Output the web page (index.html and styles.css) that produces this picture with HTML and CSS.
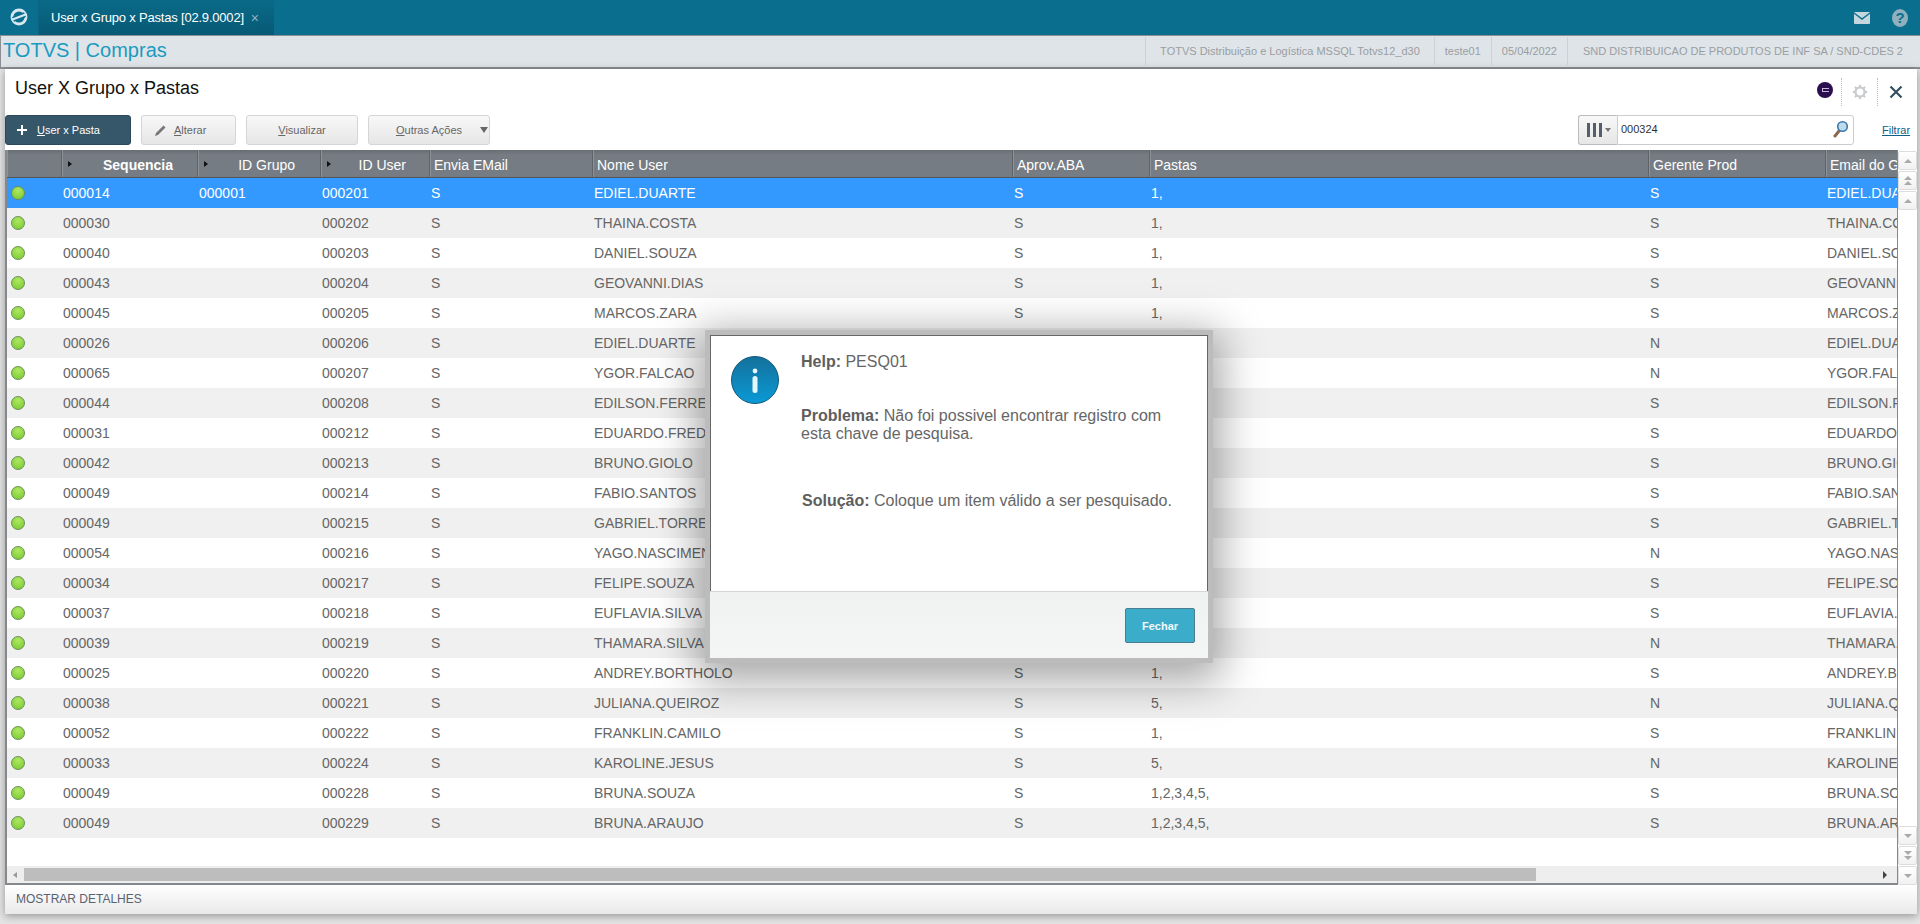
FILE: index.html
```html
<!DOCTYPE html>
<html lang="pt-BR">
<head>
    <meta charset="UTF-8">
    <title>User x Grupo x Pastas</title>
    <link rel="stylesheet" href="styles.css">
</head>
<body>
    <header class="topbar">
        <div class="logo">
            <svg width="20" height="20" viewBox="0 0 20 20"><circle cx="10" cy="10" r="7" fill="none" stroke="#d8e8ee" stroke-width="2.8"/><path d="M4 12.4 L16 7.6" stroke="#0a6f8f" stroke-width="5"/><path d="M3.5 12.6 L16.5 7.4" stroke="#d8e8ee" stroke-width="2.2"/></svg>
        </div>
        <div class="tab">
            <span>User x Grupo x Pastas [02.9.0002]</span>
            <span class="tab-close">×</span>
        </div>
        <div class="top-icons">
            <svg width="16" height="12" viewBox="0 0 16 12"><rect width="16" height="12" rx="1" fill="#c4d6de"/><path d="M0 1 L8 7 L16 1" fill="none" stroke="#0a6f8f" stroke-width="1.4"/></svg>
            <span class="help-icon">?</span>
        </div>
    </header>

    <div class="appbar">
        <div class="brand">TOTVS | Compras</div>
        <div class="appinfo">
            <span class="info-cell">TOTVS Distribuição e Logística MSSQL Totvs12_d30</span>
            <span class="info-cell">teste01</span>
            <span class="info-cell">05/04/2022</span>
            <span class="info-cell">SND DISTRIBUICAO DE PRODUTOS DE INF SA / SND-CDES 2</span>
        </div>
    </div>

    <main class="panel">
        <div class="title-row">
            <h1>User X Grupo x Pastas</h1>
            <div class="window-tools">
                <span class="dot"><i></i></span>
                <span class="tool">
                    <svg width="16" height="16" viewBox="0 0 16 16"><circle cx="8" cy="8" r="4.6" fill="none" stroke="#c9cdd0" stroke-width="2.4"/><path d="M8 .8V3M8 13v2.2M.8 8H3M13 8h2.2M2.9 2.9l1.6 1.6M11.5 11.5l1.6 1.6M13.1 2.9l-1.6 1.6M4.5 11.5l-1.6 1.6" stroke="#c9cdd0" stroke-width="2"/></svg>
                </span>
                <span class="tool">
                    <svg width="14" height="14" viewBox="0 0 14 14"><path d="M1.5 1.5 L12.5 12.5 M12.5 1.5 L1.5 12.5" stroke="#36505f" stroke-width="2.2"/></svg>
                </span>
            </div>
        </div>

        <div class="toolbar">
            <button class="btn btn-primary">
                <svg width="14" height="14" viewBox="0 0 14 14"><path d="M7 2V12M2 7H12" stroke="#fff" stroke-width="2"/></svg>
                <span><u>U</u>ser x Pasta</span>
            </button>
            <button class="btn btn-alterar">
                <svg width="13" height="13" viewBox="0 0 13 13"><path d="M1 12 L2 9 L9.5 1.5 L11.5 3.5 L4 11 Z" fill="#777"/></svg>
                <span><u>A</u>lterar</span>
            </button>
            <button class="btn btn-visualizar"><span><u>V</u>isualizar</span></button>
            <button class="btn btn-outras">
                <span><u>O</u>utras Ações</span>
                <i class="caret"></i>
            </button>
            <div class="search">
                <div class="search-select">
                    <span class="bars"><i></i><i></i><i></i></span>
                    <i class="caret-small"></i>
                </div>
                <div class="search-input">
                    <span>000324</span>
                    <svg width="16" height="18" viewBox="0 0 16 18"><path d="M6 11 L2 16" stroke="#8a6a4a" stroke-width="3" stroke-linecap="round"/><circle cx="9.5" cy="6.5" r="4.8" fill="#bcdcf0" stroke="#3f78a8" stroke-width="1.6"/></svg>
                </div>
            </div>
            <a class="filter-link">Filtrar</a>
        </div>

        <div class="grid-wrap">
            <div class="grid-main">
                <div class="grid-body">
                    <table class="grid">
                        <colgroup>
                            <col class="c-status"><col class="c-seq"><col class="c-grupo"><col class="c-user"><col class="c-envia"><col class="c-nome"><col class="c-aprov"><col class="c-pastas"><col class="c-gerente"><col class="c-email">
                        </colgroup>
                        <thead>
                            <tr>
                                <th></th>
                                <th class="th-num"><i class="th-arrow"></i><b>Sequencia</b></th>
                                <th class="th-num th-grupo"><i class="th-arrow"></i>ID Grupo</th>
                                <th class="th-num th-user"><i class="th-arrow"></i>ID User</th>
                                <th>Envia EMail</th>
                                <th>Nome User</th>
                                <th>Aprov.ABA</th>
                                <th>Pastas</th>
                                <th>Gerente Prod</th>
                                <th>Email do Gerente</th>
                            </tr>
                        </thead>
                        <tbody>
                            <tr class="selected"><td><i class="led"></i></td><td>000014</td><td>000001</td><td>000201</td><td>S</td><td>EDIEL.DUARTE</td><td>S</td><td>1,</td><td>S</td><td>EDIEL.DUARTE</td></tr>
                            <tr><td><i class="led"></i></td><td>000030</td><td></td><td>000202</td><td>S</td><td>THAINA.COSTA</td><td>S</td><td>1,</td><td>S</td><td>THAINA.COSTA</td></tr>
                            <tr><td><i class="led"></i></td><td>000040</td><td></td><td>000203</td><td>S</td><td>DANIEL.SOUZA</td><td>S</td><td>1,</td><td>S</td><td>DANIEL.SOUZA</td></tr>
                            <tr><td><i class="led"></i></td><td>000043</td><td></td><td>000204</td><td>S</td><td>GEOVANNI.DIAS</td><td>S</td><td>1,</td><td>S</td><td>GEOVANNI.DIAS</td></tr>
                            <tr><td><i class="led"></i></td><td>000045</td><td></td><td>000205</td><td>S</td><td>MARCOS.ZARA</td><td>S</td><td>1,</td><td>S</td><td>MARCOS.ZARA</td></tr>
                            <tr><td><i class="led"></i></td><td>000026</td><td></td><td>000206</td><td>S</td><td>EDIEL.DUARTE</td><td>S</td><td>1,</td><td>N</td><td>EDIEL.DUARTE</td></tr>
                            <tr><td><i class="led"></i></td><td>000065</td><td></td><td>000207</td><td>S</td><td>YGOR.FALCAO</td><td>S</td><td>1,</td><td>N</td><td>YGOR.FALCAO</td></tr>
                            <tr><td><i class="led"></i></td><td>000044</td><td></td><td>000208</td><td>S</td><td>EDILSON.FERREIRA</td><td>S</td><td>1,</td><td>S</td><td>EDILSON.FERREIRA</td></tr>
                            <tr><td><i class="led"></i></td><td>000031</td><td></td><td>000212</td><td>S</td><td>EDUARDO.FREDERICO</td><td>S</td><td>1,</td><td>S</td><td>EDUARDO.FREDERICO</td></tr>
                            <tr><td><i class="led"></i></td><td>000042</td><td></td><td>000213</td><td>S</td><td>BRUNO.GIOLO</td><td>S</td><td>1,</td><td>S</td><td>BRUNO.GIOLO</td></tr>
                            <tr><td><i class="led"></i></td><td>000049</td><td></td><td>000214</td><td>S</td><td>FABIO.SANTOS</td><td>S</td><td>1,</td><td>S</td><td>FABIO.SANTOS</td></tr>
                            <tr><td><i class="led"></i></td><td>000049</td><td></td><td>000215</td><td>S</td><td>GABRIEL.TORRES</td><td>S</td><td>1,</td><td>S</td><td>GABRIEL.TORRES</td></tr>
                            <tr><td><i class="led"></i></td><td>000054</td><td></td><td>000216</td><td>S</td><td>YAGO.NASCIMENTO</td><td>S</td><td>1,</td><td>N</td><td>YAGO.NASCIMENTO</td></tr>
                            <tr><td><i class="led"></i></td><td>000034</td><td></td><td>000217</td><td>S</td><td>FELIPE.SOUZA</td><td>S</td><td>1,</td><td>S</td><td>FELIPE.SOUZA</td></tr>
                            <tr><td><i class="led"></i></td><td>000037</td><td></td><td>000218</td><td>S</td><td>EUFLAVIA.SILVA</td><td>S</td><td>1,</td><td>S</td><td>EUFLAVIA.SILVA</td></tr>
                            <tr><td><i class="led"></i></td><td>000039</td><td></td><td>000219</td><td>S</td><td>THAMARA.SILVA</td><td>S</td><td>1,</td><td>N</td><td>THAMARA.SILVA</td></tr>
                            <tr><td><i class="led"></i></td><td>000025</td><td></td><td>000220</td><td>S</td><td>ANDREY.BORTHOLO</td><td>S</td><td>1,</td><td>S</td><td>ANDREY.BORTHOLO</td></tr>
                            <tr><td><i class="led"></i></td><td>000038</td><td></td><td>000221</td><td>S</td><td>JULIANA.QUEIROZ</td><td>S</td><td>5,</td><td>N</td><td>JULIANA.QUEIROZ</td></tr>
                            <tr><td><i class="led"></i></td><td>000052</td><td></td><td>000222</td><td>S</td><td>FRANKLIN.CAMILO</td><td>S</td><td>1,</td><td>S</td><td>FRANKLIN.CAMILO</td></tr>
                            <tr><td><i class="led"></i></td><td>000033</td><td></td><td>000224</td><td>S</td><td>KAROLINE.JESUS</td><td>S</td><td>5,</td><td>N</td><td>KAROLINE.JESUS</td></tr>
                            <tr><td><i class="led"></i></td><td>000049</td><td></td><td>000228</td><td>S</td><td>BRUNA.SOUZA</td><td>S</td><td>1,2,3,4,5,</td><td>S</td><td>BRUNA.SOUZA</td></tr>
                            <tr><td><i class="led"></i></td><td>000049</td><td></td><td>000229</td><td>S</td><td>BRUNA.ARAUJO</td><td>S</td><td>1,2,3,4,5,</td><td>S</td><td>BRUNA.ARAUJO</td></tr>
                        </tbody>
                    </table>
                </div>
                <div class="hscroll">
                    <i class="arrow-left"></i>
                    <div class="hscroll-track"><div class="hscroll-thumb"></div></div>
                    <i class="arrow-right"></i>
                </div>
            </div>
            <div class="vscroll">
                <div class="vbtn"><i class="up bar-top"></i></div>
                <div class="vbtn"><i class="up"></i><i class="up"></i></div>
                <div class="vbtn"><i class="up"></i></div>
                <div class="vspace"></div>
                <div class="vbtn"><i class="down"></i></div>
                <div class="vbtn"><i class="down"></i><i class="down"></i></div>
                <div class="vbtn"><i class="down bar-bottom"></i></div>
            </div>
        </div>

        <div class="details">MOSTRAR DETALHES</div>
    </main>

    <div class="dialog">
        <div class="dialog-body">
            <div class="info-badge">
                <svg width="48" height="48" viewBox="0 0 48 48">
                    <defs><linearGradient id="infoFill" x1="0" y1="0" x2="0" y2="1"><stop offset="0" stop-color="#14709b"/><stop offset="1" stop-color="#0a9ad6"/></linearGradient></defs>
                    <circle cx="24" cy="24" r="23.5" fill="url(#infoFill)" stroke="#125a7c"/>
                    <circle cx="24" cy="15" r="2.4" fill="#e4f7fc"/>
                    <rect x="21.5" y="20" width="5" height="17" rx="2.5" fill="#e4f7fc"/>
                </svg>
            </div>
            <div class="dialog-text">
                <p class="msg-help"><b>Help:</b> PESQ01</p>
                <p class="msg-problem"><b>Problema:</b> Não foi possivel encontrar registro com esta chave de pesquisa.</p>
                <p class="msg-solution"><b>Solução:</b> Coloque um item válido a ser pesquisado.</p>
            </div>
        </div>
        <div class="dialog-footer">
            <button class="btn-close">Fechar</button>
        </div>
    </div>
</body>
</html>
```

FILE: styles.css
```css
* {
    box-sizing: border-box;
}

html, body {
    height: 100%;
}

body {
    margin: 0;
    height: 924px;
    overflow: hidden;
    font-family: "Liberation Sans", Arial, sans-serif;
    background-color: #e4e4e4;
    color: #666;
}

/* top bar */
.topbar {
    display: flex;
    align-items: stretch;
    height: 35px;
    background-color: #0a6f8f;
}

.logo {
    width: 38px;
    display: flex;
    align-items: center;
    justify-content: center;
    padding-bottom: 2px;
}

.tab {
    width: 236px;
    display: flex;
    align-items: center;
    gap: 7px;
    padding-left: 12px;
    color: #fff;
    font-size: 13px;
    letter-spacing: -0.2px;
    background: linear-gradient(#0a6a88, #075a75);
    border-left: 1px solid #0a6482;
}

.tab-close {
    color: #8fb4c2;
    font-size: 14px;
}

.top-icons {
    margin-left: auto;
    display: flex;
    align-items: center;
    gap: 22px;
    padding-right: 12px;
}

.help-icon {
    width: 16px;
    height: 18px;
    border-radius: 50%;
    background-color: #8fb0bd;
    color: #0a6f8f;
    font-size: 15px;
    font-weight: bold;
    text-align: center;
    line-height: 18px;
}

.appbar {
    display: flex;
    justify-content: space-between;
    height: 34px;
    background-color: #dfe4e8;
    border: 1px solid #8a8f94;
    border-width: 1px 0 2px 1px;
}

.brand {
    font-size: 20px;
    color: #1b9bc0;
    padding-left: 2px;
    line-height: 28px;
}

.appinfo {
    display: flex;
    font-size: 11px;
    color: #9a9ea2;
}

.info-cell {
    display: flex;
    align-items: center;
    padding: 0 10px;
    border-left: 1px solid #ccd1d5;
    margin: 1px 0 2px;
    white-space: nowrap;
}

.info-cell:first-child {
    padding: 0 14px;
}

.info-cell:last-child {
    padding: 0 17px 0 15px;
}

/* window */
.panel {
    display: flex;
    flex-direction: column;
    height: 845px;
    margin: 0 3px 0 5px;
    background-color: #fff;
    box-shadow: 0 2px 8px rgba(0, 0, 0, 0.35);
}

.title-row {
    display: flex;
    justify-content: space-between;
    height: 46px;
    padding: 7px 0 0 10px;
}

h1 {
    margin: 0;
    font-size: 18px;
    font-weight: normal;
    color: #111;
    line-height: 24px;
}

.window-tools {
    display: flex;
    align-items: flex-start;
    padding: 2px 4px 0 0;
}

.dot {
    width: 16px;
    height: 16px;
    margin: 4px 8px 0 0;
    border-radius: 50%;
    background-color: #2b0f4f;
    display: flex;
    align-items: center;
    justify-content: center;
}

.dot i {
    width: 7px;
    height: 4px;
    border: 1px solid #c9b8de;
    border-right: none;
}

.tool {
    width: 36px;
    height: 28px;
    display: flex;
    align-items: center;
    justify-content: center;
    border-left: 1px dotted #bbb;
}

.toolbar {
    display: flex;
    align-items: center;
    height: 30px;
    margin-bottom: 5px;
}

.btn {
    height: 30px;
    display: flex;
    align-items: center;
    justify-content: center;
    gap: 8px;
    margin-right: 10px;
    padding: 0;
    font-family: inherit;
    font-size: 11px;
    color: #666;
    border: 1px solid #d5d5d5;
    border-radius: 3px;
    background: linear-gradient(#f8f8f8, #e6e6e6);
}

.btn-primary {
    width: 126px;
    color: #fff;
    background: #36566a;
    border-color: #2d4a5c;
    justify-content: flex-start;
    padding-left: 9px;
}

.btn-alterar {
    width: 95px;
    justify-content: flex-start;
    padding-left: 12px;
    gap: 7px;
}

.btn-visualizar {
    width: 112px;
}

.btn-outras {
    width: 122px;
    position: relative;
}

.caret {
    position: absolute;
    right: 1px;
    top: 11px;
    border-left: 4px solid transparent;
    border-right: 4px solid transparent;
    border-top: 6px solid #666;
}

.search {
    display: flex;
    height: 30px;
    margin-left: auto;
    margin-right: 28px;
}

.search-select {
    width: 39px;
    display: flex;
    align-items: center;
    gap: 3px;
    padding-left: 8px;
    border: 1px solid #bbb;
    border-right: none;
    border-radius: 3px 0 0 3px;
    background: linear-gradient(#f8f8f8, #e6e6e6);
}

.bars {
    display: flex;
    gap: 3px;
}

.bars i {
    width: 3px;
    height: 14px;
    background-color: #555f6b;
}

.caret-small {
    border-left: 3px solid transparent;
    border-right: 3px solid transparent;
    border-top: 4px solid #777;
}

.search-input {
    width: 237px;
    display: flex;
    align-items: center;
    justify-content: space-between;
    padding: 0 4px 3px 3px;
    font-size: 11px;
    color: #333;
    border: 1px solid #ccc;
    border-radius: 0 3px 3px 0;
}

.filter-link {
    width: 33px;
    margin-right: 2px;
    font-size: 11px;
    color: #0f5f86;
    text-decoration: underline;
}

/* grid */
.grid-wrap {
    display: flex;
    height: 735px;
}

.grid-main {
    width: 1893px;
    display: flex;
    flex-direction: column;
    border-left: 2px solid #85898d;
    border-bottom: 2px solid #85898d;
    border-right: 1px solid #85898d;
}

.grid-body {
    flex: 1;
    overflow: hidden;
}

.grid {
    table-layout: fixed;
    border-collapse: separate;
    border-spacing: 0;
    width: 1891px;
    font-size: 14px;
}

.c-status { width: 54px; }
.c-seq { width: 136px; }
.c-grupo { width: 123px; }
.c-user { width: 109px; }
.c-envia { width: 163px; }
.c-nome { width: 420px; }
.c-aprov { width: 137px; }
.c-pastas { width: 499px; }
.c-gerente { width: 177px; }
.c-email { width: 73px; }

.grid th {
    height: 28px;
    padding: 2px 4px 0 4px;
    text-align: left;
    font-weight: normal;
    color: #fff;
    white-space: nowrap;
    overflow: hidden;
    position: relative;
    background: linear-gradient(#696e74 0, #767c83 5px, #767c83 100%);
    border-left: 1px solid #5f6368;
    box-shadow: inset 1px 0 0 #8d9297;
    border-bottom: 1px solid #555;
}

.grid th:first-child {
    border-left: none;
}

.grid .th-num {
    text-align: right;
    padding-right: 24px;
}

.grid .th-grupo {
    padding-right: 25px;
}

.grid .th-user {
    padding-right: 23px;
}

.th-arrow {
    position: absolute;
    left: 6px;
    top: 11px;
    border-top: 3px solid transparent;
    border-bottom: 3px solid transparent;
    border-left: 4px solid #111;
}

.grid td {
    height: 30px;
    padding: 0 2px;
    white-space: nowrap;
    overflow: hidden;
    color: #666;
}

.grid tbody tr:nth-child(even) td {
    background-color: #f0f0f0;
}

.grid tbody tr.selected td {
    background-color: #3399ff;
    color: #fff;
}

.led {
    display: block;
    width: 14px;
    height: 14px;
    margin-left: 2px;
    border-radius: 50%;
    border: 1px solid #6b8f5a;
    background: radial-gradient(circle at 50% 30%, #b0e860, #74c82e);
}

.hscroll {
    display: flex;
    align-items: center;
    height: 17px;
    background-color: #eee;
}

.arrow-left {
    width: 17px;
    padding-left: 6px;
}

.arrow-left::before {
    content: "";
    display: block;
    width: 0;
    border-top: 3px solid transparent;
    border-bottom: 3px solid transparent;
    border-right: 4px solid #999;
}

.hscroll-track {
    flex: 1;
}

.hscroll-thumb {
    width: 1512px;
    height: 13px;
    background-color: #bdbdbd;
}

.arrow-right {
    width: 14px;
    flex: none;
}

.arrow-right::before {
    content: "";
    display: block;
    width: 0;
    border-top: 4px solid transparent;
    border-bottom: 4px solid transparent;
    border-left: 4px solid #444;
}

.vscroll {
    width: 19px;
    display: flex;
    flex-direction: column;
    gap: 1px;
    padding-top: 1px;
    background-color: #fff;
}

.vspace {
    flex: 1;
}

.vbtn {
    height: 19px;
    display: flex;
    flex-direction: column;
    align-items: center;
    justify-content: center;
    gap: 1px;
    background: linear-gradient(#fff, #f1f1f1);
    border: 1px solid #ddd;
    border-radius: 2px;
}

.up, .down {
    width: 0;
    border-left: 4px solid transparent;
    border-right: 4px solid transparent;
}

.up {
    border-bottom: 4px solid #aaa;
}

.down {
    border-top: 4px solid #aaa;
}

.details {
    height: 29px;
    padding: 0 11px;
    font-size: 12px;
    line-height: 28px;
    color: #5a6270;
    background: linear-gradient(#fff, #e9e9e9);
}

/* help dialog */
.dialog {
    position: absolute;
    left: 705px;
    top: 330px;
    width: 508px;
    height: 333px;
    display: flex;
    flex-direction: column;
    background-color: #fff;
    border: 5px solid #bcbcbc;
    box-shadow: 0 10px 40px 8px rgba(0, 0, 0, 0.35);
}

.dialog-body {
    flex: 1;
    display: flex;
    padding: 20px 0 0 20px;
    border: 1px solid #666;
    border-bottom: none;
}

.info-badge {
    width: 48px;
    height: 48px;
    margin-right: 22px;
}

.dialog-text {
    font-size: 16px;
    line-height: 18px;
    color: #666;
}

.dialog-text p {
    margin: 0;
}

.dialog-text b {
    color: #5e5e5e;
}

.dialog-text .msg-help {
    margin-top: -3px;
}

.dialog-text .msg-problem {
    margin-top: 36px;
    width: 380px;
}

.dialog-text .msg-solution {
    margin: 49px 0 0 1px;
}

.dialog-footer {
    height: 67px;
    display: flex;
    align-items: flex-start;
    justify-content: flex-end;
    padding: 16px 13px 0 0;
    background: linear-gradient(#f0f1f1, #f4f5f5);
    border-top: 1px solid #d5d5d5;
}

.btn-close {
    width: 70px;
    height: 35px;
    font-family: inherit;
    font-size: 11px;
    font-weight: bold;
    color: #f2f8fb;
    background-color: #3caccb;
    border: 1px solid #4a7d8e;
    border-radius: 2px;
}
```
